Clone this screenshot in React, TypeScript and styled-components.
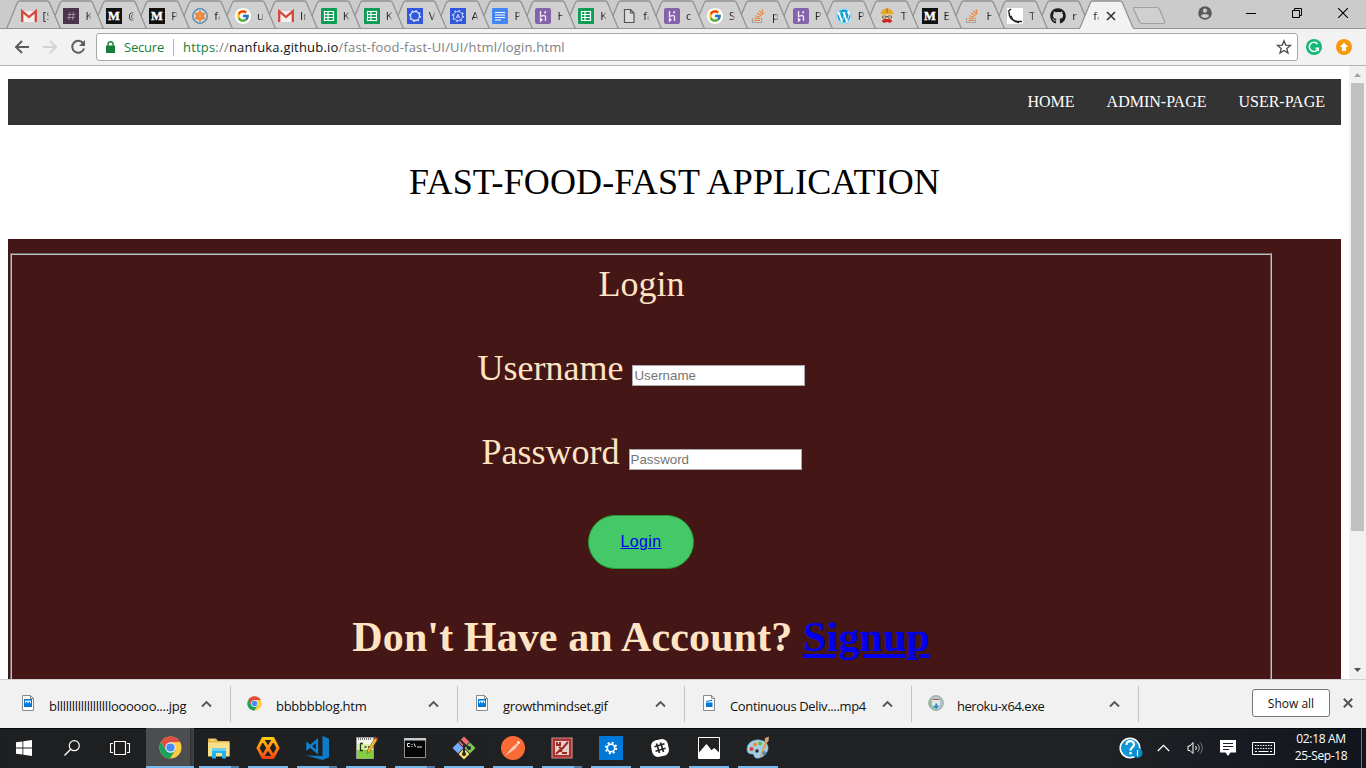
import React from "react";
import styled, { createGlobalStyle, css } from "styled-components";
import { FcGoogle } from "react-icons/fc";
import { FaGithub, FaStackOverflow, FaWordpress } from "react-icons/fa";

const ui = `"Open Sans", "Noto Sans", sans-serif`;
const serif = `"Liberation Serif", "Times New Roman", serif`;
const sans = `"Liberation Sans", Arial, sans-serif`;

const GlobalStyle = createGlobalStyle`
  *, *::before, *::after { box-sizing: border-box; }
  body { margin: 0; overflow: hidden; background: #fff; }
  svg { display: block; flex: none; }
`;

const Screen = styled.div`
  width: 1366px;
  height: 768px;
  display: flex;
  flex-direction: column;
  overflow: hidden;
  font-family: ${ui};
`;

/* ---------- tab strip ---------- */

const TabStrip = styled.header`
  height: 29px;
  flex: none;
  display: flex;
  background: linear-gradient(#cbcbcb 28px, #949494 28px);
  padding-left: 6px;
`;

const Tab = styled.div<{ $order: number }>`
  position: relative;
  z-index: ${(p) => p.$order};
  width: 55px;
  height: 29px;
  flex: none;
  margin-right: -12.1px;
  display: flex;
  align-items: center;
  padding: 2px 0 0 14.500px;
`;

const TabShape = styled.svg`
  position: absolute;
  left: 0;
  top: 0;
  z-index: -1;
`;

const TabLabel = styled.span<{ $shift?: number }>`
  width: 6px;
  margin-left: ${(p) => p.$shift ?? 6}px;
  overflow: hidden;
  white-space: nowrap;
  font-size: 11.5px;
  line-height: 16px;
  color: #1c1c1c;
  -webkit-mask-image: linear-gradient(90deg, #000 40%, rgba(0, 0, 0, 0.25));
`;

const TabClose = styled.svg`
  margin-left: 7px;
`;

const NewTab = styled.svg`
  margin: 6px 0 0 9px;
`;

const WindowButtons = styled.div`
  display: flex;
  margin-left: auto;
`;

const WindowButton = styled.div`
  width: 46px;
  height: 26px;
  display: flex;
  align-items: center;
  justify-content: center;
`;

/* ---------- toolbar ---------- */

const Toolbar = styled.div`
  height: 37px;
  flex: none;
  display: flex;
  align-items: flex-start;
  padding: 4px 14px 0 14px;
  background: #f2f2f2;
  border-bottom: 1px solid #b6b4b6;
`;

const NavButtons = styled.div`
  display: flex;
  gap: 12px;
  width: 82px;
  padding-top: 6px;
`;

const Omnibox = styled.div`
  width: 1202px;
  height: 28px;
  display: flex;
  align-items: center;
  background: #fff;
  border: 1px solid #a8a8a8;
  border-radius: 3px;
  padding: 0 5px 0 9px;
`;

const Secure = styled.span`
  width: 50px;
  margin-left: 9px;
  font-size: 13px;
  letter-spacing: -0.2px;
  color: #188038;
  border-right: 1px solid #b5b5b5;
  line-height: 17px;
`;

const Url = styled.span`
  margin-left: 9px;
  font-size: 13px;
  letter-spacing: 0.19px;
  color: #808080;
  white-space: nowrap;
  flex: 1;
  line-height: 18px;
  b {
    font-weight: 400;
    color: #111;
  }
  i {
    font-style: normal;
    color: #188038;
  }
`;

const Extensions = styled.div`
  display: flex;
  gap: 14px;
  padding: 6px 0 0 8px;
`;

/* ---------- page ---------- */

const Viewport = styled.div`
  height: 613px;
  flex: none;
  display: flex;
  overflow: hidden;
  background: #fff;
`;

const Page = styled.main`
  width: 1349px;
  padding: 13px 8px 0;
  font-family: ${serif};
`;

const SiteNav = styled.nav`
  height: 46px;
  background: #333;
  display: flex;
  justify-content: flex-end;
`;

const SiteNavLink = styled.a`
  padding: 14px 16px;
  font-size: 16px;
  line-height: 18px;
  color: #fff;
`;

const Title = styled.h1`
  margin: 37px 0 36px;
  font-size: 36px;
  font-weight: 400;
  line-height: 41px;
  letter-spacing: 0.12px;
  text-align: center;
  color: #000;
`;

const LoginPanel = styled.section`
  height: 520px;
  padding: 14px 69px 0 2px;
  background: #451616;
`;

const LoginFieldset = styled.fieldset`
  height: 520px;
  margin: 0;
  padding: 8px 0 0;
  border: 2px groove #c0c0c0;
  color: #ffe4c4;
  font-size: 36px;
  text-align: center;
`;

const FormLine = styled.div`
  height: 42px;
  line-height: 43px;
  margin-bottom: 42px;
  padding-left: 1px;
  white-space: nowrap;
`;

const TextInput = styled.input`
  width: 173px;
  height: 21px;
  padding: 1px;
  border: 1px solid #a9a9a9;
  background: #fff;
  font: 13.333px ${sans};
  &::placeholder {
    color: #757575;
  }
`;

const LoginButton = styled.button`
  display: block;
  width: 106px;
  height: 54px;
  margin: 0 auto;
  border: 1px solid #259b34;
  border-radius: 28px;
  background: #45c968;
  font: 16px ${sans};
  letter-spacing: 0.35px;
  color: #0000ee;
  text-decoration: underline;
`;

const SignupLine = styled.h2`
  margin: 44px 0 0;
  font-size: 42px;
  line-height: 48px;
  letter-spacing: 0.11px;
  font-weight: 700;
  a {
    color: #0000ee;
    text-decoration: underline;
  }
`;

const Scrollbar = styled.div`
  width: 17px;
  background: #f1f1f1;
  display: flex;
  flex-direction: column;
  align-items: center;
`;

const ScrollThumb = styled.div`
  width: 13px;
  height: 448px;
  background: #c1c1c1;
  margin-bottom: auto;
`;

/* ---------- downloads ---------- */

const DownloadShelf = styled.div`
  height: 49px;
  flex: none;
  display: flex;
  background: #f1f1f1;
  border-top: 1px solid #d3cfcf;
  padding: 0 12px 0 4px;
`;

const DownloadItem = styled.div`
  width: 227px;
  height: 36px;
  margin-top: 6px;
  display: flex;
  align-items: center;
  border-right: 1px solid #c4c4c4;
  padding: 0 18px 0 16px;
`;

const DownloadIcon = styled.span`
  width: 16px;
  margin-top: -2px;
`;

const DownloadName = styled.span<{ $spacing: number }>`
  flex: 1;
  margin: 4px 0 0 13px;
  font-size: 13px;
  line-height: 18px;
  letter-spacing: ${(p) => p.$spacing}px;
  white-space: nowrap;
  color: #111;
`;

const ShowAll = styled.button`
  width: 78px;
  height: 28px;
  margin: 9px 13px 0 auto;
  padding: 0;
  background: #fff;
  border: 1px solid #777;
  border-radius: 3px;
  font: 12px ${ui};
  color: #111;
`;

const ShelfClose = styled.svg`
  margin: 18px 1px 0 0;
`;

/* ---------- taskbar ---------- */

const Taskbar = styled.footer`
  height: 40px;
  flex: none;
  display: flex;
  box-shadow: inset 0 1px #060708;
  background: linear-gradient(90deg, #1d1f21, #202224 60%, #202225 80%, #11151d);
`;

const SystemButton = styled.div`
  width: 48px;
  display: flex;
  align-items: center;
  justify-content: center;
`;

const Apps = styled.div`
  display: flex;
  gap: 9px;
  margin-left: 2px;
`;

const AppButton = styled.div<{ $current?: boolean; $stack?: boolean }>`
  width: ${(p) => (p.$current ? 48 : 40)}px;
  height: 40px;
  padding-top: 1px;
  display: flex;
  align-items: center;
  justify-content: center;
  border-bottom: 2px solid #76b9ed;
  ${(p) =>
    p.$current &&
    css`
      margin-right: -4px;
      background: linear-gradient(90deg, #4b4d4f 44px, #2b2d2f 44px, #3d3f41 46px);
    `}
  ${(p) =>
    p.$stack &&
    css`
      border-image: linear-gradient(90deg, #76b9ed 31px, #527fa3 31px) 2;
    `}
`;

const Tray = styled.div`
  margin-left: auto;
  display: flex;
  align-items: center;
  padding-right: 4px;
`;

const TraySlot = styled.div<{ $w: number }>`
  width: ${(p) => p.$w}px;
  display: flex;
  justify-content: center;
`;

const Clock = styled.div`
  width: 81px;
  height: 40px;
  padding-top: 2px;
  border-right: 1px solid #72757a;
  text-align: center;
  color: #fff;
  font-size: 12px;
  line-height: 17px;
  letter-spacing: -0.35px;
`;

/* ---------- icons ---------- */

const Gmail = () => (
  <svg width="16" height="16" viewBox="0 0 16 16">
    <path d="M1 3h14v11H1z" fill="#f3eeee" />
    <path d="M1.2 14V3.2L8 9l6.800-5.800V14" fill="none" stroke="#d8453b" strokeWidth="2.300" />
  </svg>
);
const Slack = () => (
  <svg width="16" height="16" viewBox="0 0 16 16">
    <path d="M0 0h16v16H0z" fill="#4a344b" />
    <path d="M7 4 5.800 12M10.500 4 9.300 12M4.500 6.500h8M4 9.500h8" stroke="#a592a7" strokeWidth=".9" />
  </svg>
);
const Medium = () => (
  <svg width="16" height="16" viewBox="0 0 16 16">
    <path d="M0 0h16v16H0z" fill="#111" />
    <text x="8" y="12.300" textAnchor="middle" fontFamily="Liberation Serif" fontWeight="700" fontSize="12.500" fill="#fff" stroke="#fff" strokeWidth=".4">M</text>
  </svg>
);
const Flower = () => (
  <svg width="16" height="16" viewBox="0 0 16 16">
    <circle cx="8" cy="8" r="7.200" fill="#d5d9dc" stroke="#5a8bb0" strokeWidth="1.500" />
    {[0, 60, 120, 180, 240, 300].map((a) => (
      <ellipse key={a} cx="8" cy="4.900" rx="1.700" ry="2.500" fill="#ef8534" transform={`rotate(${a} 8 8)`} />
    ))}
  </svg>
);
const Google = () => (
  <svg width="16" height="16" viewBox="0 0 16 16">
    <circle cx="8" cy="8" r="8" fill="#fff" />
    <FcGoogle x="1" y="1" width="14" height="14" size={14} />
  </svg>
);
const Sheets = () => (
  <svg width="16" height="16" viewBox="0 0 16 16">
    <rect width="16" height="16" rx="1" fill="#109d58" />
    <path d="M3.500 3.500h9v9h-9zM3.500 6.500h9M3.500 9.500h9M7 3.500v9" fill="none" stroke="#fff" strokeWidth="1.200" />
  </svg>
);
const Gear = ({ letter }: { letter?: boolean }) => (
  <svg width="16" height="16" viewBox="0 0 16 16">
    <path d="M0 0h16v16H0z" fill="#3057dc" />
    <circle cx="8" cy="8" r="4.500" fill="none" stroke="#d5ddfb" strokeWidth={letter ? 0.9 : 1.3} />
    <circle cx="8" cy="8" r="5.500" fill="none" stroke="#d5ddfb" strokeWidth="1.300" strokeDasharray="1.600 2.700" />
    {letter && <path d="m6.300 10.200 1.700-4 1.700 4M7 9h2" fill="none" stroke="#d5ddfb" strokeWidth=".9" />}
  </svg>
);
const Docs = () => (
  <svg width="16" height="16" viewBox="0 0 16 16">
    <rect width="16" height="16" rx="1" fill="#4487f4" />
    <path d="M3 4.500h10M3 7h10M3 9.500h10M3 12h6" stroke="#fff" strokeWidth="1.200" />
  </svg>
);
const Heroku = () => (
  <svg width="16" height="16" viewBox="0 0 16 16">
    <rect width="16" height="16" rx="2" fill="#8563ab" />
    <path d="M5.500 3v5.500c2-1 5-1.700 5 .5v4M10.500 3c0 1-.4 1.800-1 2.500M5.500 10.500V13l1.500-1.300z" fill="none" stroke="#f2ecf8" strokeWidth="1.300" />
  </svg>
);
const Blank = () => (
  <svg width="16" height="16" viewBox="0 0 16 16">
    <path d="M3.500 1.500h6l3.500 3.500v9.500H3.500zM9.500 1.500V5H13" fill="#dcdcdc" stroke="#555" strokeWidth="1.200" />
  </svg>
);
const Stack = () => (
  <svg width="16" height="16" viewBox="0 0 16 16">
    <path d="M2.500 10v4.500h9V10" fill="none" stroke="#a5a5a5" strokeWidth="1.200" />
    <path d="M4.300 12.500h5.700M4.500 10.200l5.500.5M5.300 7.700l5.200 1.500M7 5l4.500 2.800M9.300 2.700l3.200 4M12 1.200l1.200 4.800" fill="none" stroke="#f08034" strokeWidth="1.100" />
  </svg>
);
const Wordpress = () => (
  <svg width="16" height="16" viewBox="0 0 16 16">
    <circle cx="8" cy="8" r="7.800" fill="#fff" />
    <FaWordpress size={16} color="#129fd4" />
  </svg>
);
const Builder = () => (
  <svg width="16" height="16" viewBox="0 0 16 16">
    <path d="M2.500 6h11v5l-2.500 3H5l-2.500-3z" fill="#ead5ad" />
    <path d="M1.500 6.300C2 2 5 .5 8 .5s6 1.500 6.500 5.800z" fill="#e5a72c" />
    <path d="M7 .5h2v4H7z" fill="#c77f18" />
    <path d="M3.500 8h3.500v2H3.500zM9 8h3.500v2H9zM7 8.500h2" fill="#eee" stroke="#504a44" strokeWidth=".8" />
    <path d="M2.500 13 5 11h6l2.500 2-2.500 2-3-1-3 1z" fill="#c92823" />
  </svg>
);
const Flask = () => (
  <svg width="16" height="16" viewBox="0 0 16 16">
    <path d="M0 0h16v16H0z" fill="#fff" />
    <path d="M1 3.500 4 1M2 4c0 5 3 8.500 8 9.500M10 13.500h5M4 8c1 4 4 6 8 6.500" fill="none" stroke="#222" strokeWidth="1.500" />
  </svg>
);
const Github = () => <FaGithub size={16} color="#1b1b1b" />;

const Chrome = ({ size }: { size: number }) => (
  <svg width={size} height={size} viewBox="0 0 24 24">
    <circle cx="12" cy="12" r="11.500" fill="#fccd43" />
    <path d="M2.040 6.250A11.500 11.500 0 0 1 21.960 6.250L12 6.500 7.200 14.700z" fill="#dd4f43" />
    <path d="M2.040 6.250A11.500 11.500 0 0 0 11.500 23.490L16.900 14.600 7.200 14.700z" fill="#1aa260" />
    <circle cx="12" cy="12" r="5.400" fill="#f1f1f1" />
    <circle cx="12" cy="12" r="4.300" fill="#4a8af4" />
  </svg>
);

const FilePicture = ({ video }: { video?: boolean }) => (
  <svg width="16" height="16" viewBox="0 0 16 16">
    <path d="M2.500.5h8l3 3v12h-11z" fill="#fff" stroke="#8a8a8a" />
    <path d="M10.500.5v3h3" fill="none" stroke="#8a8a8a" />
    {video ? (
      <path d="M5 7.500h6.500V12H5zM5 6l6-1.300.3 1.100L5.200 7z" fill="#0078d7" />
    ) : (
      <>
        <path d="M4 4h8v8H4z" fill="#0078d7" />
        <path d="m5 9 1.500-2.500L8 8.500l1.500-2L11 9V5.500H5z" fill="#d9efff" />
      </>
    )}
  </svg>
);
const Installer = () => (
  <svg width="16" height="16" viewBox="0 0 16 16">
    <circle cx="8" cy="8" r="7.300" fill="#b8ccd0" stroke="#919b9c" />
    <path d="M1.500 5.500h6V14C3 13 1 10 1.500 5.500z" fill="#7cbf8a" />
    <path d="M3.500 4h9v7h-9z" fill="#dfe8e4" stroke="#9aa" strokeWidth=".6" />
    <path d="M4.500 4.500h7" stroke="#b05b4e" />
    <path d="M7.300 8.500h2v2.500h1.500l-2.500 3-2.500-3h1.500z" fill="#2a86d8" />
  </svg>
);

const Caret = () => (
  <svg width="11" height="8" viewBox="0 0 11 8">
    <path d="M1 6.500 5.500 2 10 6.500" fill="none" stroke="#555" strokeWidth="1.900" />
  </svg>
);

const tabs: { icon: React.ReactNode; text: string }[] = [
  { icon: <Gmail />, text: "[S" },
  { icon: <Slack />, text: "K" },
  { icon: <Medium />, text: "@" },
  { icon: <Medium />, text: "P" },
  { icon: <Flower />, text: "fa" },
  { icon: <Google />, text: "u" },
  { icon: <Gmail />, text: "In" },
  { icon: <Sheets />, text: "K" },
  { icon: <Sheets />, text: "K" },
  { icon: <Gear />, text: "V" },
  { icon: <Gear letter />, text: "A" },
  { icon: <Docs />, text: "P" },
  { icon: <Heroku />, text: "H" },
  { icon: <Sheets />, text: "K" },
  { icon: <Blank />, text: "fa" },
  { icon: <Heroku />, text: "c" },
  { icon: <Google />, text: "S" },
  { icon: <Stack />, text: "p" },
  { icon: <Heroku />, text: "P" },
  { icon: <Wordpress />, text: "P" },
  { icon: <Builder />, text: "T" },
  { icon: <Medium />, text: "E" },
  { icon: <Stack />, text: "H" },
  { icon: <Flask />, text: "T" },
  { icon: <Github />, text: "r" },
];

const Outline = ({ active }: { active?: boolean }) => (
  <TabShape width="56" height="29" viewBox="0 0 56 29">
    <path
      d="M0 28.500C1 28 1 27.500 1.500 26.500L11 3.500C11.800 1.500 12.500 1 13.500 1H41.500C42.500 1 43 1.500 43.800 3.500L53.500 26.500C54 27.500 54 28 55.500 28.500"
      fill={active ? "#f2f2f2" : "#d0d0d0"}
      stroke="#939393"
      strokeWidth="1.300"
    />
    <path d={active ? "M1 28h53v1H1z" : "M0 28h56v1H0z"} fill={active ? "#f2f2f2" : "#949494"} />
  </TabShape>
);

const downloads = [
  { icon: <FilePicture />, name: "blllllllllllllllllloooooo....jpg", spacing: -0.27 },
  { icon: <Chrome size={15} />, name: "bbbbbblog.htm", spacing: -0.27 },
  { icon: <FilePicture />, name: "growthmindset.gif", spacing: -0.34 },
  { icon: <FilePicture video />, name: "Continuous Deliv....mp4", spacing: -0.36 },
  { icon: <Installer />, name: "heroku-x64.exe", spacing: -0.47 },
];

const Explorer = () => (
  <svg width="24" height="24" viewBox="0 0 24 24">
    <path d="M1 2.500h8l2 2.500h11.500v15H1z" fill="#e6b548" />
    <path d="M3 4h5" stroke="#fff3c4" />
    <path d="M1 6.500h21.500v14H1z" fill="#fbe08a" />
    <path d="M5 22.500V12.500h14v10h-4v-5.500H9v5.500z" fill="#1fb4f1" />
    <path d="M5 12.500h14v2.500H5z" fill="#5fd0f8" />
  </svg>
);
const HexX = () => (
  <svg width="24" height="24" viewBox="0 0 24 24">
    <defs>
      <linearGradient id="hx" gradientUnits="userSpaceOnUse" x1="0" y1="1" x2="0" y2="23">
        <stop stopColor="#ffd00f" />
        <stop offset="1" stopColor="#fb3a12" />
      </linearGradient>
    </defs>
    <path d="M7 2.500h10L22 12l-5 9.500H7L2 12zM7 4l10 16M17 4 7 20" fill="none" stroke="url(#hx)" strokeWidth="3" strokeLinejoin="round" />
  </svg>
);
const VsCode = () => (
  <svg width="24" height="24" viewBox="0 0 24 24">
    <path d="M17.500 0 24 2.800v18.500L17.500 24 1 19.500l16.500.5z" fill="#0d7bc7" />
    <path d="m2.500 8 9.500 8V4.500L2.500 12.500z" fill="none" stroke="#0f83d1" strokeWidth="2.300" />
  </svg>
);
const Notepad = () => (
  <svg width="24" height="24" viewBox="0 0 24 24">
    <path d="M2.500 1.500h17v21h-17z" fill="#f4f6ec" stroke="#999" />
    <path d="M3 14h16v8.500H3z" fill="#84ce43" />
    <path d="M3 8h12v6H3z" fill="#d8efa4" />
    <path d="M4 3h14" stroke="#777" strokeDasharray="1 1" strokeWidth="2" />
    <path d="M9 7.500H6.500v7H9M10.500 11h2M14 11h2" fill="none" stroke="#223b1b" strokeWidth="1.300" />
    <path d="m13 18 .500-4 7.500-12 2.500 1.500L16 15.500z" fill="#f1bd31" stroke="#8a5c1a" strokeWidth=".7" />
    <path d="M21 .5 24 2.200l-1 1.800-2.800-1.700z" fill="#c43d3d" />
  </svg>
);
const Cmd = () => (
  <svg width="24" height="24" viewBox="0 0 24 24">
    <path d="M1.500 2.500h21v19h-21z" fill="#050505" stroke="#8e9295" />
    <path d="M1 2h22v2.500H1z" fill="#c8ccce" />
    <path d="M7 7.500H4.500v3H7M9 8v1M9 10v1M11 7.500l1.500 3.500M14 11h5" fill="none" stroke="#e4e4e4" />
  </svg>
);
const GitBash = () => (
  <svg width="24" height="24" viewBox="0 0 24 24">
    <path d="m12 .5 5.500 5.500-5.500 5.500L6.500 6z" fill="#f07070" />
    <path d="m18 6.500 5.500 5.500-5.500 5.500-5.500-5.500z" fill="#7fc658" />
    <path d="m12 12.500 5.500 5.500-5.500 5.500L6.500 18z" fill="#fbdc6c" />
    <path d="M6 6.500 11.500 12 6 17.500.5 12z" fill="#78a8fb" />
    <path d="m8 4 4 4v9M12 8l5 4" fill="none" stroke="#26282a" strokeWidth="2" />
    <circle cx="12" cy="18" r="2" fill="#26282a" />
    <circle cx="17" cy="12" r="2" fill="#26282a" />
  </svg>
);
const Postman = () => (
  <svg width="24" height="24" viewBox="0 0 24 24">
    <circle cx="12" cy="12" r="12" fill="#fa6a35" />
    <path d="M5.500 18.500 12 11l4-3 .8.800L14 12.500z" fill="#fdc6ac" stroke="#ffe6da" strokeWidth=".7" />
    <circle cx="17.500" cy="6.500" r="1.600" fill="#ffe6da" />
  </svg>
);
const RedTool = () => (
  <svg width="24" height="24" viewBox="0 0 24 24">
    <path d="M2 2h20v20H2z" fill="#a83232" stroke="#cf8a86" strokeWidth="1.200" />
    <path d="M5 5h14v14H5z" fill="#e9cdc9" />
    <path d="M7 6v3h3V6M18 6l-6 7-3-2M6 18l4-4 2 1.500M12 17h5" fill="none" stroke="#9c2826" strokeWidth="2" />
  </svg>
);
const Settings = () => (
  <svg width="24" height="24" viewBox="0 0 24 24">
    <path d="M0 0h24v24H0z" fill="#0078d7" />
    <circle cx="12" cy="12" r="3.700" fill="none" stroke="#fff" strokeWidth="1.600" />
    <circle cx="12" cy="12" r="5.200" fill="none" stroke="#fff" strokeWidth="2" strokeDasharray="2 2.084" />
  </svg>
);
const SlackApp = () => (
  <svg width="24" height="24" viewBox="0 0 24 24">
    <rect x="3.500" y="3.500" width="17" height="17" rx="6" fill="#fff" transform="rotate(-12 12 12)" />
    <path d="m8.500 7.500 3 9.500M12.500 6.500l3 9.500M6.500 10.800l10-3M7.500 15.300l10-3" stroke="#222426" strokeWidth="1.700" />
  </svg>
);
const Photos = () => (
  <svg width="24" height="24" viewBox="0 0 24 24">
    <path d="M1.500 1.500h21v21h-21z" fill="none" stroke="#fff" />
    <path d="M2 16.500 9.500 8l5 6L17.500 12l5 5v5H2z" fill="#fff" />
    <path d="m14 14 2-2.500" stroke="#222426" />
  </svg>
);
const Paint = () => (
  <svg width="24" height="24" viewBox="0 0 24 24">
    <path d="M1 13C1 7 7 3 14 4s10 7 7 12-8 7-11 6-1-4-4-4-5-1-5-5z" fill="#a3cfe6" stroke="#6b99b7" strokeWidth=".6" />
    <circle cx="5.500" cy="13" r="2" fill="#df3c2e" />
    <circle cx="9" cy="8.500" r="2" fill="#f2902c" />
    <circle cx="14" cy="7.500" r="2" fill="#68ba3f" />
    <circle cx="11" cy="15" r="1.700" fill="#242628" />
    <circle cx="18" cy="17" r="2" fill="#3489cf" />
    <path d="m14 20 5-14 2 1-6 14z" fill="#eb9a36" />
    <path d="m18.500 6 .5-4 4-1.500L22.500 5 21 7z" fill="#d3a36e" />
  </svg>
);

const apps: { icon: React.ReactNode; stack?: boolean; current?: boolean }[] = [
  { icon: <Chrome size={23} />, current: true },
  { icon: <Explorer />, stack: true },
  { icon: <HexX /> },
  { icon: <VsCode />, stack: true },
  { icon: <Notepad /> },
  { icon: <Cmd />, stack: true },
  { icon: <GitBash /> },
  { icon: <Postman /> },
  { icon: <RedTool />, stack: true },
  { icon: <Settings /> },
  { icon: <SlackApp /> },
  { icon: <Photos /> },
  { icon: <Paint /> },
];

export default function App() {
  return (
    <Screen>
      <GlobalStyle />
      <TabStrip>
        {tabs.map((t, i) => (
          <Tab key={i} $order={30 - i}>
            <Outline />
            {t.icon}
            <TabLabel>{t.text}</TabLabel>
          </Tab>
        ))}
        <Tab $order={40}>
          <Outline active />
          <TabLabel $shift={0}>fa</TabLabel>
          <TabClose width="10" height="10" viewBox="0 0 10 10">
            <path d="m1 1 8 8M9 1 1 9" stroke="#333" strokeWidth="1.600" />
          </TabClose>
        </Tab>
        <NewTab width="36" height="19" viewBox="0 0 36 19">
          <path d="M3.500 1.500h22.500c1.500 0 2 .5 2.500 1.500l5 12.500c.5 1.300 0 2-1 2H11c-1.500 0-2-.5-2.500-1.500L2.500 3c-.4-1 0-1.500 1-1.500z" fill="#d0d0d0" stroke="#a0a0a0" strokeWidth="1.200" />
        </NewTab>
        <WindowButtons>
          <WindowButton>
            <svg width="14" height="14" viewBox="0 0 14 14">
              <circle cx="7" cy="7" r="6.800" fill="#5a5a5a" />
              <circle cx="7" cy="4.700" r="2.100" fill="#cbcbcb" />
              <path d="M2.800 10c1-2.800 7.400-2.800 8.400 0-2 2.500-6.400 2.500-8.400 0z" fill="#cbcbcb" />
            </svg>
          </WindowButton>
          <WindowButton>
            <svg width="10" height="10" viewBox="0 0 10 10"><path d="M0 5.500h10" stroke="#000" /></svg>
          </WindowButton>
          <WindowButton>
            <svg width="10" height="10" viewBox="0 0 10 10">
              <path d="M.5 2.500h7v7h-7zM2.500 2.500v-2h7v7h-2" fill="none" stroke="#000" />
            </svg>
          </WindowButton>
          <WindowButton>
            <svg width="10" height="10" viewBox="0 0 10 10"><path d="m0 0 10 10M10 0 0 10" stroke="#000" strokeWidth="1.100" /></svg>
          </WindowButton>
        </WindowButtons>
      </TabStrip>

      <Toolbar>
        <NavButtons>
          <svg width="16" height="16" viewBox="0 0 16 16"><path d="M15 8H2.500M8 2 2 8l6 6" fill="none" stroke="#5a5d61" strokeWidth="2" /></svg>
          <svg width="16" height="16" viewBox="0 0 16 16"><path d="M1 8h12.500M8 2l6 6-6 6" fill="none" stroke="#d3d3d3" strokeWidth="2" /></svg>
          <svg width="16" height="16" viewBox="0 0 16 16">
            <path d="M13.300 4.500A6 6 0 1 0 14 9.500" fill="none" stroke="#5a5d61" strokeWidth="2" />
            <path d="M15 1v6H9z" fill="#5a5d61" />
          </svg>
        </NavButtons>
        <Omnibox>
          <svg width="9" height="12" viewBox="0 0 9 12">
            <path d="M0 4.500h9V12H0z" fill="#188038" />
            <path d="M2 5V3a2.500 2.300 0 0 1 5 0v2" fill="none" stroke="#188038" strokeWidth="1.400" />
          </svg>
          <Secure>Secure</Secure>
          <Url><i>https</i>://<b>nanfuka.github.io</b>/fast-food-fast-UI/UI/html/login.html</Url>
          <svg width="16" height="16" viewBox="0 0 16 16">
            <path d="m8 1.800 1.700 4.300 4.700.3-3.600 3 1.200 4.600L8 11.500 4 14l1.200-4.600-3.600-3 4.700-.3z" fill="none" stroke="#4c4c4c" strokeWidth="1.300" />
          </svg>
        </Omnibox>
        <Extensions>
          <svg width="16" height="16" viewBox="0 0 16 16">
            <circle cx="8" cy="8" r="8" fill="#15b877" />
            <path d="M11.500 5A4.600 4.600 0 1 0 12.300 9.200H9.500M12.300 9v3" fill="none" stroke="#fff" strokeWidth="1.500" />
          </svg>
          <svg width="16" height="16" viewBox="0 0 16 16">
            <circle cx="8" cy="8" r="8" fill="#f79a0a" />
            <path d="m8 3.500 4.200 4.500H10v4H6V8H3.800z" fill="#fff" />
          </svg>
        </Extensions>
      </Toolbar>

      <Viewport>
        <Page>
          <SiteNav>
            <SiteNavLink>HOME</SiteNavLink>
            <SiteNavLink>ADMIN-PAGE</SiteNavLink>
            <SiteNavLink>USER-PAGE</SiteNavLink>
          </SiteNav>
          <Title>FAST-FOOD-FAST APPLICATION</Title>
          <LoginPanel>
            <LoginFieldset>
              <FormLine>Login</FormLine>
              <FormLine>Username <TextInput placeholder="Username" /></FormLine>
              <FormLine>Password <TextInput type="password" placeholder="Password" /></FormLine>
              <LoginButton>Login</LoginButton>
              <SignupLine>Don't Have an Account? <a>Signup</a></SignupLine>
            </LoginFieldset>
          </LoginPanel>
        </Page>
        <Scrollbar>
          <svg width="17" height="17" viewBox="0 0 17 17"><path d="m5 11 3.500-4 3.500 4z" fill="#a3a3a3" /></svg>
          <ScrollThumb />
          <svg width="17" height="17" viewBox="0 0 17 17"><path d="m5 6 3.500 4L12 6z" fill="#505050" /></svg>
        </Scrollbar>
      </Viewport>

      <DownloadShelf>
        {downloads.map((d) => (
          <DownloadItem key={d.name}>
            <DownloadIcon>{d.icon}</DownloadIcon>
            <DownloadName $spacing={d.spacing}>{d.name}</DownloadName>
            <Caret />
          </DownloadItem>
        ))}
        <ShowAll>Show all</ShowAll>
        <ShelfClose width="10" height="10" viewBox="0 0 10 10">
          <path d="m.8.8 8.400 8.400M9.200.8.8 9.200" stroke="#555" strokeWidth="2" />
        </ShelfClose>
      </DownloadShelf>

      <Taskbar>
        <SystemButton>
          <svg width="16" height="16" viewBox="0 0 16 16">
            <path d="M0 2.300 6.500 1.400v6.200H0zM7.300 1.300 16 0v7.600H7.300zM0 8.400h6.500v6.200L0 13.700zM7.300 8.400H16V16l-8.700-1.300z" fill="#fff" />
          </svg>
        </SystemButton>
        <SystemButton>
          <svg width="16" height="16" viewBox="0 0 16 16">
            <circle cx="10.300" cy="5.700" r="5" fill="none" stroke="#fff" strokeWidth="1.200" />
            <path d="M6.700 9.300.5 15.500" stroke="#fff" strokeWidth="1.300" />
          </svg>
        </SystemButton>
        <SystemButton>
          <svg width="20" height="14" viewBox="0 0 20 14">
            <path d="M4.500.5h11v13h-11zM3 2.500H.5v9H3M17 2.500h2.500v9H17" fill="none" stroke="#fff" strokeWidth="1.100" />
          </svg>
        </SystemButton>
        <Apps>
          {apps.map((a, i) => (
            <AppButton key={i} $current={a.current} $stack={a.stack}>{a.icon}</AppButton>
          ))}
        </Apps>
        <Tray>
          <TraySlot $w={32}>
            <svg width="24" height="24" viewBox="0 0 24 24">
              <circle cx="11" cy="12" r="9.800" fill="#1296d5" stroke="#fff" strokeWidth="1.600" />
              <path d="M7.500 9c0-5 7.500-5 7.500-.5 0 2.500-3.500 3-3.500 6" fill="none" stroke="#fff" strokeWidth="2.200" />
              <path d="M10.400 16h2.300v2.300h-2.300z" fill="#fff" />
              <circle cx="18.500" cy="17" r="5" fill="#0a8ccc" />
              <path d="M18.500 14v6" stroke="#fff" strokeWidth="1.200" />
            </svg>
          </TraySlot>
          <TraySlot $w={32}>
            <svg width="13" height="8" viewBox="0 0 13 8"><path d="m.8 7 5.700-5.700L12.200 7" fill="none" stroke="#fff" strokeWidth="1.300" /></svg>
          </TraySlot>
          <TraySlot $w={32}>
            <svg width="17" height="14" viewBox="0 0 17 14">
              <path d="M1 5h2l3-3.500v11L3 9.500H1z" fill="none" stroke="#fff" />
              <path d="M8.500 5c1 1.200 1 3 0 4" fill="none" stroke="#fff" />
              <path d="M10.700 3.200c2 2.200 2 5.500 0 7.600" fill="none" stroke="#b0b0b0" />
              <path d="M13 1.300c3 3.300 3 8.100 0 11.400" fill="none" stroke="#777" />
            </svg>
          </TraySlot>
          <TraySlot $w={34}>
            <svg width="16" height="16" viewBox="0 0 16 16">
              <path d="M0 0h16v12.500h-5.500L8 16l-2.500-3.500H0z" fill="#fff" />
              <path d="M3 3.500h10M3 6.500h10M3 9.500h6" stroke="#1b1e23" />
            </svg>
          </TraySlot>
          <TraySlot $w={36}>
            <svg width="23" height="13" viewBox="0 0 23 13">
              <path d="M.5.5h22v12H.5z" fill="none" stroke="#fff" />
              <path d="M3 3.500h17M3 6.500h17" stroke="#fff" strokeDasharray="1.400 1.200" />
              <path d="M3 9.500h2M6.500 9.500h10M18 9.500h2" stroke="#fff" />
            </svg>
          </TraySlot>
          <Clock>
            <div>02:18 AM</div>
            <div>25-Sep-18</div>
          </Clock>
        </Tray>
      </Taskbar>
    </Screen>
  );
}
